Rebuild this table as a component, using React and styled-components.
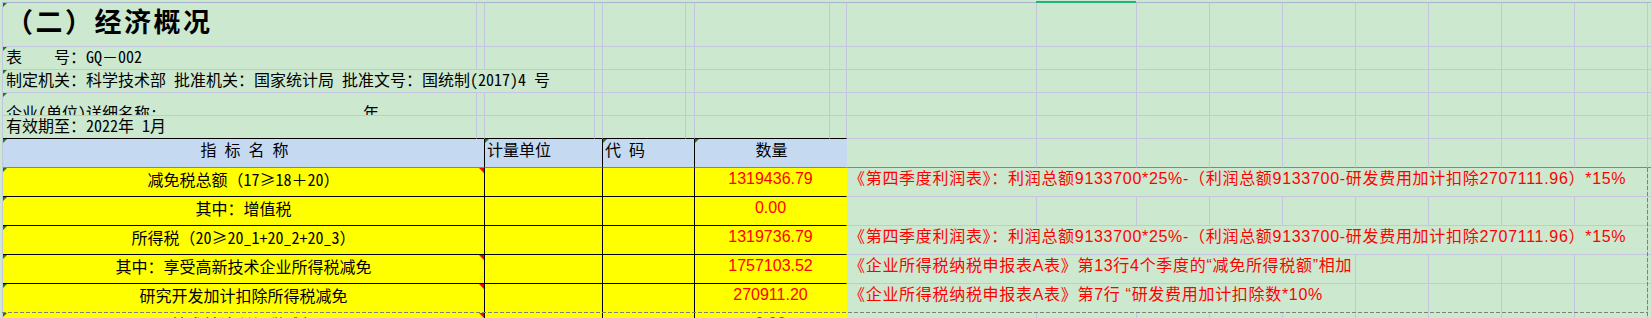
import React from "react";
import styled, { createGlobalStyle } from "styled-components";

const C = {
  sheet: "#CCE8CF",
  grid: "#C3C6DE",
  gridTop: "#A9B1CD",
  header: "#C5D9F1",
  yellow: "#FFFF00",
  black: "#000000",
  freeze: "#3AAA8A",
  active: "#22B27C",
  red: "#FF0000",
  marker: "#1E7B1E",
  pageBreak: "#7F7F7F",
};

const CJK = `"Noto Sans Mono CJK SC", "Noto Sans CJK SC", "Liberation Mono", monospace`;
const LATIN = `"Liberation Sans", "Noto Sans CJK SC", sans-serif`;

const COLUMN_WIDTHS = [474, 8, 110, 8, 83, 9, 135, 17, 190, 100, 73, 73, 73, 73, 73, 73, 73, 80];
const COLUMNS = COLUMN_WIDTHS.map((w) => `${w}px`).join(" ");
const TOTAL = COLUMN_WIDTHS.length;

const GlobalStyle = createGlobalStyle`
  html, body {
    margin: 0;
    padding: 0;
    background: ${C.sheet};
    overflow: hidden;
  }
  body {
    width: 1651px;
    height: 318px;
  }
`;

const Viewport = styled.div`
  box-sizing: border-box;
  width: 1651px;
  height: 318px;
  padding: 2px 0 0 2px;
  overflow: hidden;
  background: ${C.sheet};
`;

const Sheet = styled.div`
  position: relative;
  width: max-content;
  border-top: 1px solid ${C.gridTop};
  border-left: 1px solid ${C.grid};
`;

const Row = styled.div`
  display: grid;
  grid-template-columns: ${COLUMNS};
  height: ${(p) => p.$h}px;
`;

const Cell = styled.div`
  grid-column: span ${(p) => p.$span || 1};
  position: relative;
  box-sizing: border-box;
  min-width: 0;
  display: flex;
  align-items: center;
  justify-content: ${(p) => p.$justify || "flex-start"};
  background: ${(p) => p.$bg || "transparent"};
  border-right: 1px solid ${(p) => p.$rb || C.grid};
  border-bottom: 1px solid ${(p) => p.$bb || C.grid};
  white-space: pre;
  color: #000;
`;

const TitleCell = styled(Cell)`
  font: bold 27px/27px ${CJK};
  letter-spacing: 2.5px;
  padding: 0 0 9px 3px;
`;

const InfoCell = styled(Cell)`
  font: 16px/16px ${CJK};
  padding: 0 0 4px 3px;
`;

const ClippedInfoCell = styled(InfoCell)`
  align-items: flex-start;
  padding: 11px 0 0 3px;
  overflow: hidden;
`;

const InfoLead = styled.span`
  flex: 0 0 357px;
`;

const HeaderCell = styled(Cell)`
  font: 16px/16px ${CJK};
  background: ${C.header};
  border-right-color: ${(p) => p.$rb || C.black};
  border-bottom-color: ${C.freeze};
  padding: 0 0 9px 2px;
`;

const FrozenCell = styled(Cell)`
  border-bottom-color: ${C.freeze};
`;

const LabelCell = styled(Cell)`
  font: 16px/16px ${CJK};
  background: ${C.yellow};
  border-right-color: ${C.black};
  justify-content: center;
  padding: 0 0 6px 0;
`;

const BlankTableCell = styled(Cell)`
  background: ${C.yellow};
  border-right-color: ${C.black};
`;

const ValueCell = styled(Cell)`
  font: 16px/16px ${LATIN};
  color: ${C.red};
  background: ${C.yellow};
  border-right-color: ${C.yellow};
  justify-content: center;
  padding: 0 0 6px 0;
`;

const NoteCell = styled(Cell)`
  font: 16px/16px ${LATIN};
  letter-spacing: 0.7px;
  color: ${C.red};
  padding: 0 0 6px 2px;
`;

const ErrorMark = styled.span`
  position: absolute;
  top: 0;
  left: 0;
  width: 0;
  height: 0;
  border-top: 4px solid ${C.marker};
  border-right: 4px solid transparent;
`;

const CommentMark = styled.span`
  position: absolute;
  top: 0;
  right: 0;
  width: 0;
  height: 0;
  border-top: 5px solid ${C.red};
  border-left: 5px solid transparent;
`;

const ActiveColumnBar = styled.div`
  position: absolute;
  top: -2px;
  left: 1033px;
  width: 100px;
  height: 2px;
  background: ${C.active};
`;

const PageBreakH = styled.div`
  position: absolute;
  top: 309px;
  left: -1px;
  width: 1645px;
  height: 1px;
  background: repeating-linear-gradient(90deg, ${C.pageBreak} 0 4px, transparent 4px 6px);
`;

const PageBreakV = styled.div`
  position: absolute;
  top: 165px;
  left: 1644px;
  width: 1px;
  height: 200px;
  background: repeating-linear-gradient(180deg, ${C.pageBreak} 0 4px, transparent 4px 6px);
`;

const fillers = (from, to, Comp = Cell, props = {}) => {
  const out = [];
  for (let i = from; i < to; i++) out.push(<Comp key={`f${i}`} {...props} />);
  return out;
};

const NOTE_PROFIT =
  "《第四季度利润表》：利润总额9133700*25%-（利润总额9133700-研发费用加计扣除2707111.96）*15%";

const DATA = [
  { label: "减免税总额（17≥18＋20）", value: "1319436.79", note: NOTE_PROFIT, span: 9, comment: true },
  { label: "其中：增值税", value: "0.00" },
  { label: "所得税（20≥20_1+20_2+20_3）", value: "1319736.79", note: NOTE_PROFIT, span: 9 },
  {
    label: "其中：享受高新技术企业所得税减免",
    value: "1757103.52",
    note: "《企业所得税纳税申报表A表》第13行4个季度的“减免所得税额”相加",
    span: 5,
    comment: true,
  },
  {
    label: "研究开发加计扣除所得税减免",
    value: "270911.20",
    note: "《企业所得税纳税申报表A表》第7行 “研发费用加计扣除数*10%",
    span: 5,
    comment: true,
  },
  { label: "技术转让所得税减免", value: "0.00", comment: true },
];

function DataRow({ row, breakBelow }) {
  const bb = breakBelow ? C.yellow : C.black;
  const gb = breakBelow ? C.sheet : C.grid;
  const noteEnd = row.note ? 8 + row.span : 8;
  return (
    <Row $h={29}>
      <LabelCell $span={2} $bb={bb}>
        <ErrorMark />
        {row.label}
        {row.comment && <CommentMark />}
      </LabelCell>
      <BlankTableCell $span={2} $bb={bb} />
      <BlankTableCell $span={2} $bb={bb} />
      <ValueCell $span={2} $bb={bb}>
        {row.value}
      </ValueCell>
      {row.note && (
        <NoteCell $span={row.span} $bb={gb}>
          {row.note}
        </NoteCell>
      )}
      {fillers(noteEnd, TOTAL, Cell, { $bb: gb })}
    </Row>
  );
}

export default function App() {
  return (
    <>
      <GlobalStyle />
      <Viewport>
        <Sheet>
          <ActiveColumnBar />
          <Row $h={44}>
            <TitleCell>
              <ErrorMark />
              （二）经济概况
            </TitleCell>
            {fillers(1, TOTAL)}
          </Row>
          <Row $h={23}>
            <InfoCell>
              <ErrorMark />
              表　　号：GQ－002
            </InfoCell>
            {fillers(1, TOTAL)}
          </Row>
          <Row $h={23}>
            <InfoCell $span={3}>
              <ErrorMark />
              制定机关：科学技术部 批准机关：国家统计局 批准文号：国统制(2017)4 号
            </InfoCell>
            {fillers(3, TOTAL)}
          </Row>
          <Row $h={23}>
            <ClippedInfoCell>
              <ErrorMark />
              <InfoLead>企业(单位)详细名称:</InfoLead>
              <span>年</span>
            </ClippedInfoCell>
            {fillers(1, TOTAL)}
          </Row>
          <Row $h={23}>
            <InfoCell $bb={C.black}>有效期至：2022年 1月</InfoCell>
            {fillers(1, 8, Cell, { $bb: C.black })}
            {fillers(8, TOTAL)}
          </Row>
          <Row $h={29}>
            <HeaderCell $span={2} $justify="center">
              <ErrorMark />
              指 标 名 称
            </HeaderCell>
            <HeaderCell $span={2}>
              <ErrorMark />
              计量单位
            </HeaderCell>
            <HeaderCell $span={2}>
              <ErrorMark />
              代 码
            </HeaderCell>
            <HeaderCell $span={2} $justify="center" $rb={C.header}>
              <ErrorMark />
              数量
            </HeaderCell>
            {fillers(8, TOTAL, FrozenCell)}
          </Row>
          {DATA.map((row, i) => (
            <DataRow key={i} row={row} breakBelow={i === 4} />
          ))}
          <PageBreakH />
          <PageBreakV />
        </Sheet>
      </Viewport>
    </>
  );
}
